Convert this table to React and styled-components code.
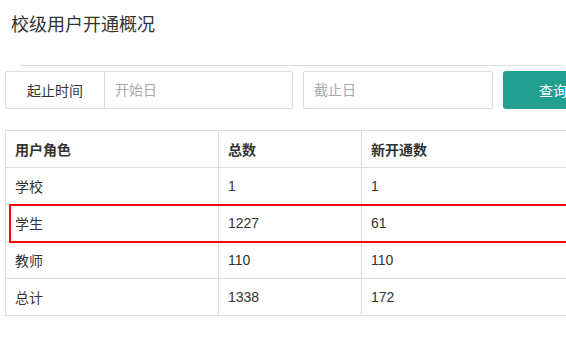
import styled, { createGlobalStyle } from 'styled-components';

const GlobalStyle = createGlobalStyle`
  body {
    margin: 0;
    background: #fff;
    font-family: "Liberation Sans", "Noto Sans CJK SC", sans-serif;
    color: #333;
    overflow: hidden;
  }
`;

const Page = styled.div`
  width: 556px;
  padding: 0 5px;
  overflow: hidden;
`;

const Title = styled.h2`
  margin: 0;
  padding: 13px 0 0 6px;
  font-size: 18px;
  line-height: 24px;
  font-weight: normal;
  color: #333;
`;

const Divider = styled.div`
  margin: 28px 0 0 15px;
  border-top: 1px solid #ddd;
`;

const Toolbar = styled.div`
  display: flex;
  gap: 10px;
  margin-top: 5px;
  height: 38px;
  width: 700px;
`;

const InputGroup = styled.div`
  display: flex;
  width: 288px;
  border: 1px solid #ddd;
  border-radius: 2px;
  box-sizing: border-box;
`;

const Addon = styled.span`
  width: 99px;
  flex: none;
  display: flex;
  align-items: center;
  justify-content: center;
  font-size: 14px;
  border-right: 1px solid #ddd;
  box-sizing: border-box;
`;

const Input = styled.input`
  flex: ${p => (p.$grow ? 1 : 'none')};
  width: ${p => p.$width || 'auto'};
  min-width: 0;
  height: 100%;
  box-sizing: border-box;
  padding: 0 10px;
  font-size: 14px;
  font-family: inherit;
  color: #333;
  border: ${p => (p.$bare ? 'none' : '1px solid #ddd')};
  border-radius: 2px;
  outline: none;
  background: transparent;
  &::placeholder {
    color: #aaa;
  }
`;

const Button = styled.button`
  width: 100px;
  flex: none;
  height: 38px;
  border: none;
  border-radius: 3px;
  background: #21a08f;
  color: #fff;
  font-size: 14px;
  font-family: inherit;
`;

const TableWrap = styled.div`
  position: relative;
  margin-top: 21px;
  width: 700px;
`;

const Table = styled.table`
  width: 660px;
  border-collapse: collapse;
  font-size: 14px;
`;

const Cell = styled.td`
  height: 37px;
  padding: 0 9px;
  border: 1px solid #ddd;
  text-align: left;
  font-weight: ${p => (p.$head ? 'bold' : 'normal')};
  box-sizing: border-box;
  width: ${p => p.$w || 'auto'};
`;

const Highlight = styled.div`
  position: absolute;
  left: 4px;
  top: 74px;
  width: 700px;
  height: 39px;
  border: 2px solid #f00;
  box-sizing: border-box;
  pointer-events: none;
`;

const rows = [
  ['学校', '1', '1'],
  ['学生', '1227', '61'],
  ['教师', '110', '110'],
  ['总计', '1338', '172'],
];

export default function App() {
  return (
    <Page>
      <GlobalStyle />
      <Title>校级用户开通概况</Title>
      <Divider />
      <Toolbar>
        <InputGroup>
          <Addon>起止时间</Addon>
          <Input $grow $bare placeholder="开始日" />
        </InputGroup>
        <Input $width="190px" placeholder="截止日" />
        <Button>查询</Button>
      </Toolbar>
      <TableWrap>
        <Table>
          <thead>
            <tr>
              <Cell as="th" $head $w="213px">用户角色</Cell>
              <Cell as="th" $head $w="143px">总数</Cell>
              <Cell as="th" $head>新开通数</Cell>
            </tr>
          </thead>
          <tbody>
            {rows.map(r => (
              <tr key={r[0]}>
                {r.map((c, i) => <Cell key={i}>{c}</Cell>)}
              </tr>
            ))}
          </tbody>
        </Table>
        <Highlight />
      </TableWrap>
    </Page>
  );
}
